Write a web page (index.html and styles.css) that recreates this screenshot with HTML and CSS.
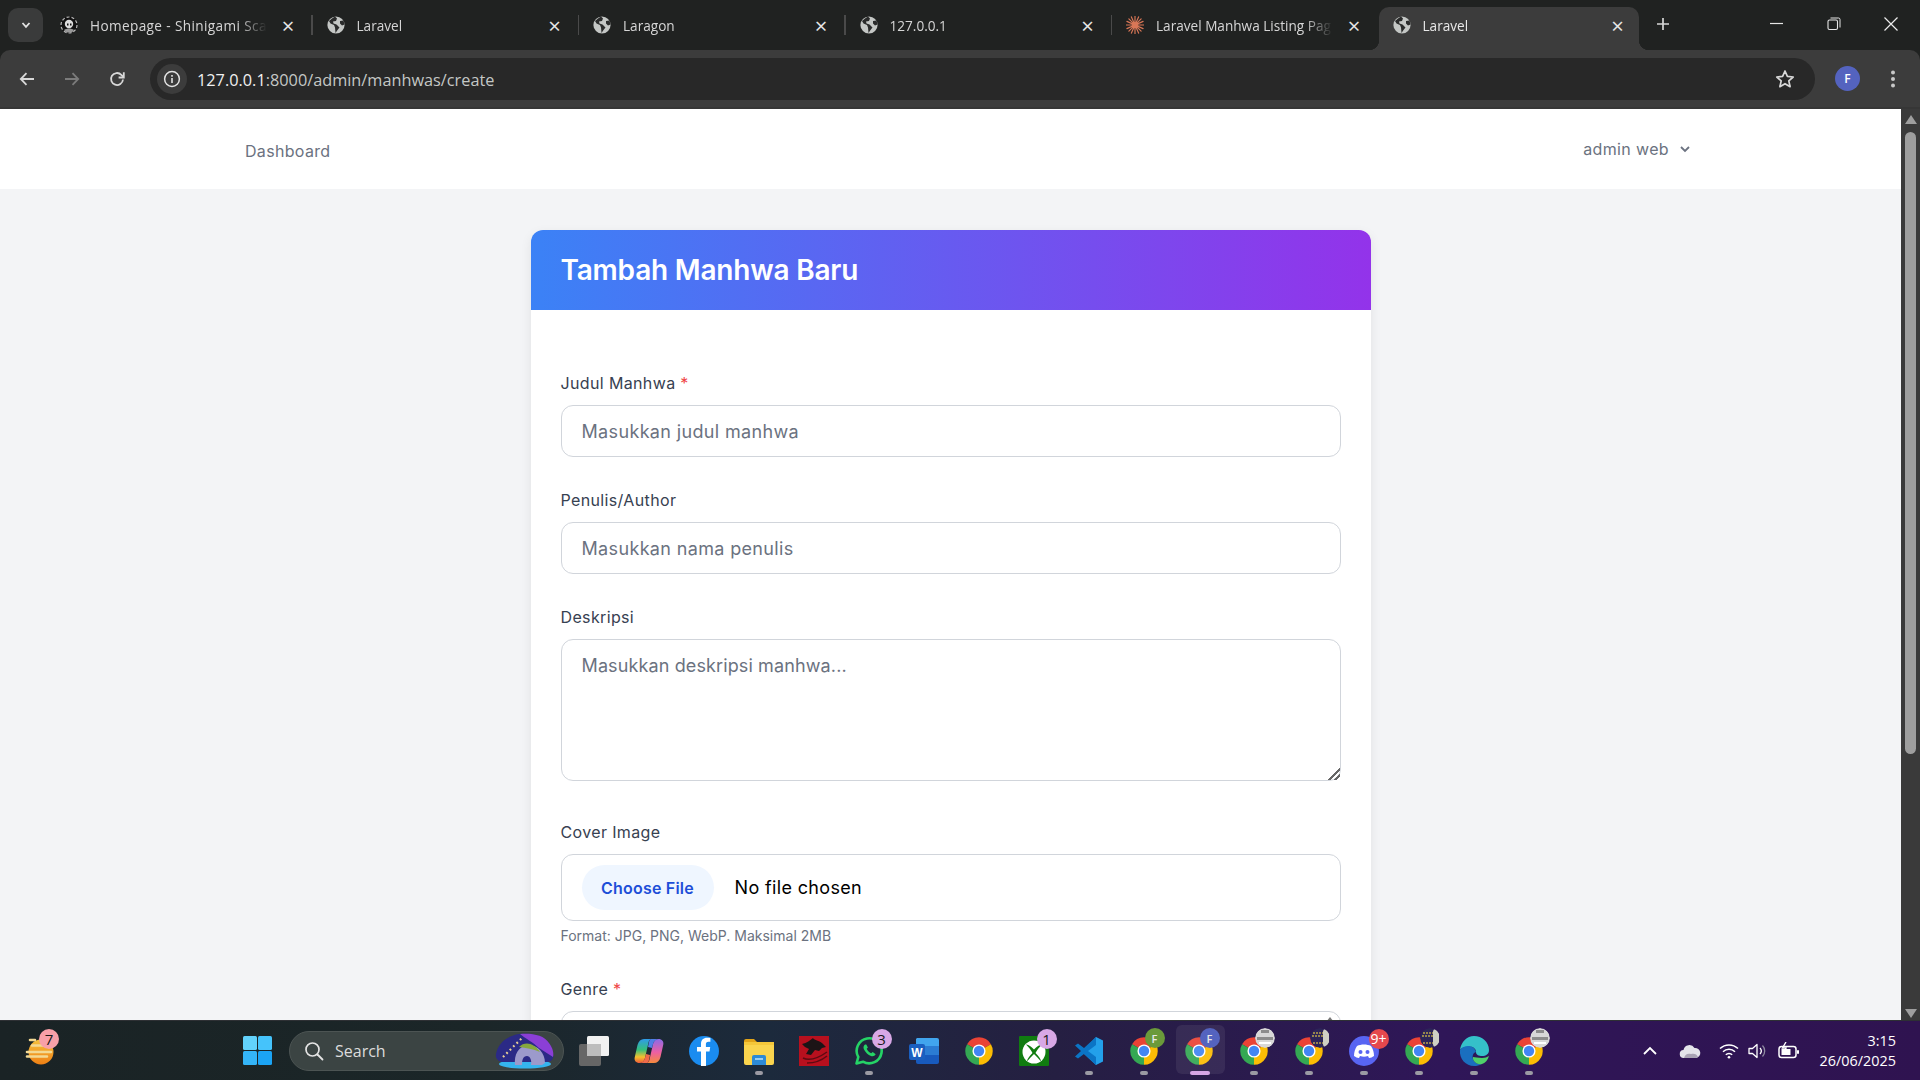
FILE: index.html
```html
<!DOCTYPE html>
<html lang="en">
<head>
<meta charset="utf-8">
<title>Laravel</title>
<link rel="stylesheet" href="styles.css">
</head>
<body>
<svg class="sprite" aria-hidden="true">
  <symbol id="globe" viewBox="0 0 18 18">
    <circle cx="9" cy="9" r="8.6" fill="#c4c7c5"/>
    <path d="M8 .6 5 2.5 2 5l1.5 2.5L7 9l1 2.5.5 5.5 2-3 2-2.500L9.500 8.500 6.500 7.500 6 5.500l3-.5 1-2.500zM13 5l3.500-.5 1 4-2.500 1-2-2z" fill="#2a2b2b"/>
  </symbol>
  <symbol id="skull" viewBox="0 0 18 18">
    <circle cx="9" cy="9" r="8.500" fill="#111"/>
    <circle cx="9" cy="9" r="8" fill="none" stroke="#bbb" stroke-width="1.200" stroke-dasharray="3 2"/>
    <circle cx="9" cy="8" r="4.200" fill="#ddd"/>
    <path d="M7 9.500h1.500v-2H7zM10 9.500h1.500v-2H10z" fill="#111"/>
    <path d="M4 14c3-2 7-2 10 0l-2 2.500H6z" fill="#999"/>
  </symbol>
  <symbol id="star" viewBox="0 0 20 20">
    <g stroke="#d97757" stroke-width="1.300" stroke-linecap="round">
      <path d="M10 0v20M0 10h20M3.200 3.200l13.600 13.600M16.800 3.200 3.200 16.800M6 1l8 18M14 1 6 19M1 6l18 8M19 6 1 14"/>
    </g>
  </symbol>
  <symbol id="chrome" viewBox="0 0 48 48">
    <path d="M24 24 43.050 13A22 22 0 0 0 4.950 13z" fill="#ea4335"/>
    <path d="M24 24 4.950 13A22 22 0 0 0 24 46z" fill="#34a853"/>
    <path d="M24 24 24 46A22 22 0 0 0 43.050 13z" fill="#fbbc04"/>
    <circle cx="24" cy="24" r="10.500" fill="#fff"/>
    <circle cx="24" cy="24" r="8.300" fill="#4285f4"/>
  </symbol>
  <symbol id="photo-dark" viewBox="0 0 20 20">
    <circle cx="10" cy="10" r="10" fill="#2c2458"/>
    <rect x="13" y="1" width="6" height="18" rx="3" fill="#cfcfc4"/>
    <path d="M3 5h10M2 8h11M3 15h10" stroke="#b9a24a" stroke-width="1.500" stroke-dasharray="2 1"/>
  </symbol>
  <symbol id="photo-light" viewBox="0 0 20 20">
    <circle cx="10" cy="10" r="10" fill="#d8d8d8"/>
    <path d="M2 9h16v3H2zM6 2h8v3H6z" fill="#8d8d8d"/>
    <path d="M4 15h12" stroke="#fff" stroke-width="2"/>
  </symbol>
  <linearGradient id="cop-left" x1="0" y1="0" x2="0" y2="1"><stop offset="0" stop-color="#2f9bea"/><stop offset=".45" stop-color="#35c07a"/><stop offset=".75" stop-color="#f5c02e"/><stop offset="1" stop-color="#ee5a3a"/></linearGradient>
  <linearGradient id="cop-right" x1="0" y1="0" x2="0" y2="1"><stop offset="0" stop-color="#8b6be8"/><stop offset=".55" stop-color="#ec5fa4"/><stop offset="1" stop-color="#f58a3c"/></linearGradient>
  <linearGradient id="sun" x1="0" y1="0" x2="0" y2="1"><stop offset="0" stop-color="#f6c23e"/><stop offset="1" stop-color="#ee7f14"/></linearGradient>
</svg>

<header class="browser">
  <div class="tabstrip">
    <button class="tab-menu" type="button">
      <svg class="ico-12" viewBox="0 0 12 12"><path d="M2.500 4 6 7.800 9.500 4" fill="none" stroke="#e3e3e3" stroke-width="1.800"/></svg>
    </button>
    <div class="tab">
      <svg class="favicon"><use href="#skull"/></svg>
      <span class="tab-title tab-title-wide">Homepage - Shinigami Sca</span>
      <span class="tab-close">×</span>
    </div>
    <div class="tab">
      <svg class="favicon"><use href="#globe"/></svg>
      <span class="tab-title">Laravel</span>
      <span class="tab-close">×</span>
    </div>
    <div class="tab">
      <svg class="favicon"><use href="#globe"/></svg>
      <span class="tab-title">Laragon</span>
      <span class="tab-close">×</span>
    </div>
    <div class="tab">
      <svg class="favicon"><use href="#globe"/></svg>
      <span class="tab-title">127.0.0.1</span>
      <span class="tab-close">×</span>
    </div>
    <div class="tab tab-before-active">
      <svg class="favicon"><use href="#star"/></svg>
      <span class="tab-title">Laravel Manhwa Listing Pag</span>
      <span class="tab-close">×</span>
    </div>
    <div class="tab tab-active">
      <svg class="favicon"><use href="#globe"/></svg>
      <span class="tab-title">Laravel</span>
      <span class="tab-close">×</span>
    </div>
    <svg class="new-tab" viewBox="0 0 14 14"><path d="M7 1v12M1 7h12" stroke="#d6d6d6" stroke-width="1.700"/></svg>
    <div class="window-controls">
      <svg class="win-btn" viewBox="0 0 14 14"><path d="M0 6.500h13" stroke="#e6e6e6" stroke-width="1.200"/></svg>
      <svg class="win-btn" viewBox="0 0 14 14"><rect x="1" y="3" width="9.500" height="9.500" rx="1.500" fill="none" stroke="#e6e6e6" stroke-width="1.100"/><path d="M3.500 1h8a1.500 1.500 0 0 1 1.500 1.500v8" fill="none" stroke="#e6e6e6" stroke-width="1"/></svg>
      <svg class="win-btn" viewBox="0 0 14 14"><path d="M.5.500l13 13M13.500.500l-13 13" stroke="#ececec" stroke-width="1.200"/></svg>
    </div>
  </div>
  <div class="toolbar">
    <svg class="tool-ico tool-back" viewBox="0 0 18 18"><path d="M16 9H3M8.500 3.200 2.800 9l5.700 5.800" fill="none" stroke="#d8d8d8" stroke-width="1.800"/></svg>
    <svg class="tool-ico tool-forward" viewBox="0 0 18 18"><path d="M2 9h13M9.500 3.200 15.200 9l-5.700 5.800" fill="none" stroke="#7b7b7b" stroke-width="1.800"/></svg>
    <svg class="tool-ico tool-reload" viewBox="0 0 18 18"><path d="M15 9.500A6 6 0 1 1 13.300 4.800L15.500 7" fill="none" stroke="#d8d8d8" stroke-width="1.800"/><path d="M15.800 2.300v5.200h-5.200" fill="none" stroke="#d8d8d8" stroke-width="1.800"/></svg>
    <div class="omnibox">
      <span class="site-info">
        <svg class="ico-18" viewBox="0 0 18 18"><circle cx="9" cy="9" r="7.400" fill="none" stroke="#e3e3e3" stroke-width="1.500"/><path d="M9 8v5M9 5v1.700" stroke="#e3e3e3" stroke-width="1.600"/></svg>
      </span>
      <span class="url"><span class="url-host">127.0.0.1</span>:8000/admin/manhwas/create</span>
      <svg class="bookmark" viewBox="0 0 20 20"><path d="m10 2 2.400 5.400 5.800.6-4.400 3.900 1.300 5.800L10 14.700l-5.100 3 1.300-5.800L1.800 8l5.800-.6z" fill="none" stroke="#d8d8d8" stroke-width="1.700" stroke-linejoin="round"/></svg>
    </div>
    <span class="profile">F</span>
    <svg class="kebab" viewBox="0 0 6 20"><circle cx="3" cy="3.500" r="2" fill="#c8c8c8"/><circle cx="3" cy="10" r="2" fill="#c8c8c8"/><circle cx="3" cy="16.500" r="2" fill="#c8c8c8"/></svg>
  </div>
</header>

<div class="viewport">
  <main class="page">
    <nav class="nav">
      <a class="nav-link">Dashboard</a>
      <button class="nav-user" type="button">admin web
        <svg class="ico-12" viewBox="0 0 12 12"><path d="M2 4l4 4 4-4" fill="none" stroke="#6b7280" stroke-width="1.800"/></svg>
      </button>
    </nav>
    <section class="card">
      <h1 class="card-head">Tambah Manhwa Baru</h1>
      <form class="card-body">
        <div class="field">
          <label class="label">Judul Manhwa <span class="req">*</span></label>
          <input class="control" type="text" placeholder="Masukkan judul manhwa">
        </div>
        <div class="field">
          <label class="label">Penulis/Author</label>
          <input class="control" type="text" placeholder="Masukkan nama penulis">
        </div>
        <div class="field field-area">
          <label class="label">Deskripsi</label>
          <textarea class="control control-area" placeholder="Masukkan deskripsi manhwa..."></textarea>
        </div>
        <div class="field">
          <label class="label">Cover Image</label>
          <div class="control control-file">
            <span class="file-btn">Choose File</span>
            <span class="file-name">No file chosen</span>
          </div>
          <p class="hint">Format: JPG, PNG, WebP. Maksimal 2MB</p>
        </div>
        <div class="field">
          <label class="label">Genre <span class="req">*</span></label>
          <div class="control control-multi"><span class="multi-up"></span></div>
        </div>
      </form>
    </section>
  </main>
  <aside class="scrollbar">
    <span class="arrow-up"></span>
    <span class="thumb"></span>
    <span class="arrow-down"></span>
  </aside>
</div>

<footer class="taskbar">
  <div class="weather">
    <svg class="weather-ico" viewBox="0 0 32 32">
      <circle cx="19" cy="17" r="12.500" fill="url(#sun)"/>
      <path d="M8 5h5M10 10.500h16M5 17h24M5 21.500h20" stroke="#f3d993" stroke-width="2.600" stroke-linecap="round"/>
    </svg>
    <span class="badge badge-pink">7</span>
  </div>
  <div class="start">
    <svg class="start-ico" viewBox="0 0 29 29">
      <rect width="14" height="14" rx="1.500" fill="#62d2fb"/><rect x="15" width="14" height="14" rx="1.500" fill="#45c3fb"/>
      <rect y="15" width="14" height="14" rx="1.500" fill="#34b5f8"/><rect x="15" y="15" width="14" height="14" rx="1.500" fill="#1ba4f5"/>
    </svg>
  </div>
  <div class="search">
    <svg class="search-ico" viewBox="0 0 20 20"><circle cx="8.500" cy="8.500" r="6.500" fill="none" stroke="#e4e4e4" stroke-width="1.700"/><path d="m13.500 13.500 5 5" stroke="#e4e4e4" stroke-width="1.800" stroke-linecap="round"/></svg>
    <span class="search-text">Search</span>
    <svg class="search-art" viewBox="0 0 60 36">
      <ellipse cx="30" cy="31" rx="26" ry="4.500" fill="#35b4ee"/>
      <path d="M1 21C3 10 12 3 24 1c12-1 24 1 29 9 4 5 6 11 5 15-1 3-4 4-7 4H8c-4 0-8-3-7-8z" fill="#2b2a86"/>
      <path d="M25 1c12-1 24 1 29 9 4 5 5 11 4 14L44 15c-6-6-13-9-19-14z" fill="#8b3fd6"/>
      <path d="M20 32c-1-10 3-19 13-20 10 0 17 8 17 18l-3 2H36c1-5-1-9-4-9-4 0-5 4-5 9z" fill="#9c9acb"/>
      <path d="M24 14c6-6 15-4 21 5-7-3-14-4-21-5z" fill="#86a83d"/>
      <path d="M8 24 28 4" stroke="#e8cf95" stroke-width="2.200" stroke-dasharray="1.800 3"/>
    </svg>
  </div>
  <ul class="apps">
    <li class="app">
      <svg class="app-ico" viewBox="0 0 30 30"><rect y="8" width="22" height="22" rx="2" fill="#666"/><rect x="8" width="22" height="20" rx="1.500" fill="#f1f1f1"/><rect x="8" y="8" width="14" height="12" fill="#bdbdbd"/></svg>
    </li>
    <li class="app">
      <svg class="app-ico" viewBox="0 0 30 26">
        <path d="M10 1h8c-2 0-3 1.500-3.500 3.500L11 20c-.7 3-2.500 5-5.500 5C2 25 0 22.500.7 19.500L3.500 7C4.500 3 7 1 10 1z" fill="url(#cop-left)"/>
        <path d="M20 25h-8c2 0 3-1.500 3.500-3.500L19 6c.7-3 2.500-5 5.500-5 3.500 0 5.500 2.500 4.800 5.500L26.500 19c-1 4-3.500 6-6.500 6z" fill="url(#cop-right)"/>
        <path d="M17 1h8c-3 0-5 1.500-6 5l-1 4-4-1 1-5c.3-1.500 1-3 2-3z" fill="#4f7fe6"/>
        <path d="M13 25H5.500c3 0 4.500-2 5.500-5l1-4 4 1-1 5c-.3 1.500-1 3-2 3z" fill="#ef6a4a"/>
      </svg>
    </li>
    <li class="app">
      <svg class="app-ico" viewBox="0 0 30 30"><circle cx="15" cy="15" r="15" fill="#1a8cf0"/><path d="M20.500 15.500l.7-4.500h-4.300V8.200c0-1.300.6-2.400 2.500-2.400h2V2c-1-.2-2.300-.3-3.400-.3-3.600 0-6 2.200-6 6.100V11H8v4.500h4V30h5V15.500z" fill="#fff"/></svg>
    </li>
    <li class="app app-on">
      <svg class="app-ico" viewBox="0 0 30 30"><path d="M0 5a2 2 0 0 1 2-2h8l3 3H0z" fill="#e2a418"/><path d="M0 6h30v21a2 2 0 0 1-2 2H2a2 2 0 0 1-2-2z" fill="#fad44e"/><path d="M0 6h30v3H0z" fill="#f5c73a"/><path d="M8 21a2 2 0 0 1 2-2h10a2 2 0 0 1 2 2v8H8z" fill="#2d8ad6"/><path d="M11 23h8" stroke="#bfe3fb" stroke-width="1.500"/></svg>
    </li>
    <li class="app">
      <svg class="app-ico" viewBox="0 0 30 30"><rect width="30" height="30" fill="#b8101e"/><path d="M3 8c5-1 8-4 11-6 1 2 5 2 9 5l4 4-4 1-3 3-4-1-4 5-5-1 3-5-4-2z" fill="#1c1416"/><path d="M4 22c6 3 14 1 24-6M8 27c6 0 14-2 20-7" stroke="#5e0a12" stroke-width="1.500" fill="none"/></svg>
    </li>
    <li class="app app-on">
      <svg class="app-ico" viewBox="0 0 30 30"><path d="M2.500 27.500 4.300 21A12.500 12.500 0 1 1 9 25.700z" fill="none" stroke="#25d366" stroke-width="2.600" stroke-linejoin="round"/><path d="M11 8.500c-1.500 1-2 3-1 5 1.500 3 4 5.300 7 6.500 2 .7 3.800 0 4.700-1.700l-3-2.200-1.500 1.200c-2-.8-3.600-2.500-4.500-4.500l1.200-1.400-1.600-3z" fill="#25d366"/></svg>
      <span class="badge badge-lilac">3</span>
    </li>
    <li class="app">
      <svg class="app-ico" viewBox="0 0 30 30"><path d="M8 2h20a2 2 0 0 1 2 2v6H7V3z" fill="#41a5ee"/><rect x="7" y="10" width="23" height="9" fill="#2b7cd3"/><path d="M7 19h23v7a2 2 0 0 1-2 2H9a2 2 0 0 1-2-2z" fill="#185abd"/><rect y="8" width="16" height="16" rx="2" fill="#1a5fc0"/><text class="word-w" x="8" y="20.500">W</text></svg>
    </li>
    <li class="app"><svg class="app-ico"><use href="#chrome"/></svg></li>
    <li class="app">
      <svg class="app-ico" viewBox="0 0 30 30"><rect width="30" height="30" rx="1" fill="#107c10"/><circle cx="15" cy="16" r="11.500" fill="#fff"/><path d="M15 13.500C12 10.500 9 8 7 8.500c2.500 2.500 5 5.500 6.500 8.500-3 3-5.500 6-5.500 8.500 2-2.500 4.500-5 7-7.500 2.500 2.500 5 5 7 7.500 0-2.500-2.500-5.500-5.500-8.500 1.500-3 4-6 6.500-8.500-2-.5-5 2-8 5z" fill="#107c10"/></svg>
      <span class="badge badge-lilac">1</span>
    </li>
    <li class="app app-on">
      <svg class="app-ico" viewBox="0 0 30 30"><path d="M22 1 29 4.500v21L22 29 8 16z" fill="#23a0ea"/><path d="M22 1 10 12 4 7.500 1 9.500 7 15l-6 5.500 3 2 6-4.500 12 11V21l-8-6 8-6z" fill="#0b74c5"/></svg>
    </li>
    <li class="app app-on">
      <svg class="app-ico"><use href="#chrome"/></svg>
      <span class="avatar avatar-green">F</span>
    </li>
    <li class="app app-on app-active">
      <svg class="app-ico"><use href="#chrome"/></svg>
      <span class="avatar avatar-blue">F</span>
    </li>
    <li class="app app-on">
      <svg class="app-ico"><use href="#chrome"/></svg>
      <svg class="avatar"><use href="#photo-light"/></svg>
    </li>
    <li class="app app-on">
      <svg class="app-ico"><use href="#chrome"/></svg>
      <svg class="avatar"><use href="#photo-dark"/></svg>
    </li>
    <li class="app app-on">
      <svg class="app-ico" viewBox="0 0 30 30"><circle cx="15" cy="15" r="15" fill="#5865f2"/><path d="M8 10c4-2 10-2 14 0 2 3 3 6 3 10-2 1-3 2-5 2l-1-2c-3 1-5 1-8 0l-1 2c-2 0-3-1-5-2 0-4 1-7 3-10z" fill="#fff"/><circle cx="11.500" cy="16" r="2" fill="#5865f2"/><circle cx="18.500" cy="16" r="2" fill="#5865f2"/></svg>
      <span class="badge badge-red">9+</span>
    </li>
    <li class="app app-on">
      <svg class="app-ico"><use href="#chrome"/></svg>
      <svg class="avatar"><use href="#photo-dark"/></svg>
    </li>
    <li class="app app-on">
      <svg class="app-ico" viewBox="0 0 30 30"><path d="M1 14C2 6 8 0 15 0c8 0 15 6 15 14 0 4-3 6-7 6-3 0-6-1-6-4 0-4-4-6-8-5-4 0-7 1-8 3z" fill="#35c1c9"/><path d="M1 14c2-3 5-4 8-4 4 0 7 2 8 6-3 1-4 4-3 7 1 3 4 6 9 5-3 1.500-5 2-8 2C7 30 0 23 1 14z" fill="#1a6fbf"/><path d="M14 23c1 3 4 6 9 5 3-1 6-4 7-8-2 1-4 2-7 2-4 0-7-1-9-1z" fill="#4fd06a"/></svg>
    </li>
    <li class="app app-on">
      <svg class="app-ico"><use href="#chrome"/></svg>
      <svg class="avatar"><use href="#photo-light"/></svg>
    </li>
  </ul>
  <div class="tray">
    <svg class="tray-chev" viewBox="0 0 14 10"><path d="M1 8l6-6 6 6" fill="none" stroke="#fff" stroke-width="1.800"/></svg>
    <svg class="tray-cloud" viewBox="0 0 22 16"><path d="M5 15a4 4 0 0 1-.5-8A6 6 0 0 1 15.500 5 5 5 0 0 1 17 15z" fill="#e4e4ea"/><path d="M5 15c1-4 4-5 7-4 3-1 6 0 7 3l-2 1z" fill="#a9a4b4"/></svg>
    <svg class="tray-wifi" viewBox="0 0 20 16"><path d="M1 5.500a13 13 0 0 1 18 0M4 8.800a8.500 8.500 0 0 1 12 0M6.800 11.800a4.500 4.500 0 0 1 6.400 0" fill="none" stroke="#fff" stroke-width="1.500"/><circle cx="10" cy="14.300" r="1.300" fill="#fff"/></svg>
    <svg class="tray-vol" viewBox="0 0 20 18"><path d="M1 6.500h3.500L9 2.500v13l-4.500-4H1z" fill="none" stroke="#fff" stroke-width="1.300" stroke-linejoin="round"/><path d="M12 6a4.500 4.500 0 0 1 0 6" fill="none" stroke="#fff" stroke-width="1.300"/><path d="M14.500 3.500a8 8 0 0 1 0 11" fill="none" stroke="#8f8aa0" stroke-width="1.300"/></svg>
    <svg class="tray-bat" viewBox="0 0 22 18"><rect x="1" y="4.500" width="17" height="11" rx="2.500" fill="none" stroke="#fff" stroke-width="1.500"/><rect x="19" y="8" width="2" height="4" rx="1" fill="#fff"/><rect x="3.500" y="7" width="9" height="6" fill="#fff"/><path d="M8 0 4.500 6H8l-1 4" fill="none" stroke="#fff" stroke-width="1.400"/></svg>
    <div class="clock"><span>3:15</span><span>26/06/2025</span></div>
  </div>
</footer>
</body>
</html>
```

FILE: styles.css
```css
* { box-sizing: border-box; }
html, body { margin: 0; padding: 0; height: 100%; overflow: hidden; }
body { display: flex; flex-direction: column; height: 1080px; font-family: "Open Sans", "Noto Sans", sans-serif; background: #f3f4f6; }
.sprite { position: absolute; width: 0; height: 0; }
.ico-12 { width: 12px; height: 12px; display: block; }
.ico-18 { width: 18px; height: 18px; display: block; }

/* browser chrome */
.browser { flex: none; height: 109px; background: #202221; display: flex; flex-direction: column; }
.tabstrip { height: 50px; display: flex; align-items: flex-start; padding: 7px 0 0 8px; position: relative; }
.tab-menu { width: 35px; height: 34px; margin: 1px 3px 0 0; border: 0; border-radius: 10px; background: #3a3b3b; display: flex; align-items: center; justify-content: center; padding: 0; }
.tab { width: 266.500px; height: 36px; flex: none; display: flex; align-items: center; padding: 0 0 0 14px; position: relative; color: #d6d6d6; font-size: 13.600px; }
.tab::after { content: ""; position: absolute; right: 0; top: 8px; height: 20px; width: 1.500px; background: #4a4a4a; }
.tab-before-active::after, .tab-active::after { display: none; }
.favicon { width: 18px; height: 18px; flex: none; }
.tab-title { margin-left: 12px; width: 177px; white-space: nowrap; overflow: hidden; -webkit-mask-image: linear-gradient(90deg, #000 84%, transparent 100%); mask-image: linear-gradient(90deg, #000 84%, transparent 100%); }
.tab-title-wide { letter-spacing: .38px; }
.tab-close { margin-left: 13px; width: 16px; text-align: center; font-size: 22px; line-height: 20px; color: #e6e6e6; }
.tab-active { width: 260px; height: 43px; padding-bottom: 7px; background: #3c3c3c; border-radius: 10px 10px 0 0; color: #e8e8e8; }
.tab-active .tab-title { width: 174px; }
.tab-active::before { content: ""; position: absolute; left: -10px; bottom: 0; width: 10px; height: 10px; background: radial-gradient(circle at 0 0, transparent 10px, #3c3c3c 10.500px); }
.tab-active::after { content: ""; display: block; position: absolute; right: -10px; top: auto; bottom: 0; width: 10px; height: 10px; background: radial-gradient(circle at 100% 0, transparent 10px, #3c3c3c 10.500px); }
.new-tab { width: 14px; height: 14px; margin: 10px 0 0 17px; }
.window-controls { margin-left: auto; display: flex; gap: 43px; padding: 10px 22px 0 0; }
.win-btn { width: 14px; height: 14px; display: block; }
.toolbar { flex: 1; display: flex; align-items: center; background: #3c3c3c; border-radius: 10px 10px 0 0; border-bottom: 2px solid #363636; padding: 0 0 0 18px; }
.tool-ico { width: 18px; height: 18px; flex: none; }
.tool-forward { margin-left: 27px; }
.tool-reload { margin-left: 27px; }
.omnibox { width: 1665px; height: 42px; margin-left: 24px; border-radius: 21px; background: #282828; display: flex; align-items: center; padding: 0 20px 0 7px; }
.site-info { width: 30px; height: 30px; border-radius: 50%; background: #3c3c3c; display: flex; align-items: center; justify-content: center; flex: none; }
.url { margin: 3px 0 0 10px; font-size: 16.300px; color: #c4c7c5; white-space: nowrap; }
.url-host { color: #f0f0f0; }
.bookmark { width: 20px; height: 20px; margin-left: auto; }
.profile { width: 25px; height: 25px; margin-left: 20px; border-radius: 50%; background: #5463bf; color: #fff; font-size: 12px; font-weight: 600; display: flex; align-items: center; justify-content: center; flex: none; }
.kebab { width: 6px; height: 20px; margin-left: 30px; flex: none; }

/* page */
.viewport { flex: none; height: 911px; display: flex; overflow: hidden; }
.page { flex: 1; min-width: 0; height: 911px; overflow: hidden; background: #f3f4f6; font-family: Inter, "Noto Sans", sans-serif; }
.nav { height: 80px; background: #fff; display: flex; justify-content: space-between; padding: 0 210px 0 245px; }
.nav-link { align-self: center; margin-top: 4px; font-size: 16px; letter-spacing: .32px; color: #6b7280; }
.nav-user { align-self: center; margin: 0; padding: 0; border: 0; background: none; font: inherit; font-size: 16px; letter-spacing: .36px; color: #6b7280; display: flex; align-items: center; gap: 10px; }
.card { width: 840px; margin: 41px auto 0; background: #fff; border-radius: 12px; box-shadow: 0 4px 12px rgba(0,0,0,.08); }
.card-head { margin: 0; height: 80px; padding: 0 30px; border-radius: 12px 12px 0 0; background: linear-gradient(90deg, #3b82f6, #9333ea); color: #fff; font-size: 28px; font-weight: 600; letter-spacing: -.2px; line-height: 80px; }
.card-body { padding: 61px 30px 0; }
.field { margin-bottom: 31px; }
.field-area { margin-bottom: 39px; }
.label { display: block; height: 24px; line-height: 24px; margin-bottom: 10px; font-size: 16px; font-weight: 400; letter-spacing: .36px; color: #374151; }
.req { color: #ef4444; }
.control { display: block; width: 100%; height: 52px; padding: 0 20px; border: 1.500px solid #d1d5db; border-radius: 12px; background: #fff; font: inherit; font-size: 18px; letter-spacing: .35px; color: #111; outline: 0; }
.control::placeholder { color: #6b7280; opacity: 1; }
.control-area { height: 142px; padding: 15px 20px; resize: vertical; letter-spacing: .12px; }
.control-area::-webkit-resizer { background: linear-gradient(135deg, transparent 58%, #666 58%, #666 68%, transparent 68%, transparent 78%, #666 78%, #666 88%, transparent 88%); }
.control-file { height: 67px; display: flex; align-items: center; }
.file-btn { width: 132px; height: 45px; border-radius: 23px; background: #eff6ff; color: #1d4ed8; font-size: 16px; font-weight: 600; letter-spacing: .2px; padding-top: 1px; display: flex; align-items: center; justify-content: center; }
.file-name { margin-left: 21px; color: #000; }
.hint { margin: 5px 0 0; font-size: 14px; line-height: 20px; color: #6b7280; }
.control-multi { height: 120px; position: relative; }
.multi-up { position: absolute; right: 6px; top: 5px; border: 4px solid transparent; border-bottom: 5px solid #777; border-top: 0; }

.scrollbar { flex: none; width: 19px; background: #3a3a3a; display: flex; flex-direction: column; align-items: center; padding-top: 6px; position: relative; }
.arrow-up { border: 6.500px solid transparent; border-top: 0; border-bottom: 9px solid #9e9e9e; }
.thumb { width: 11px; height: 622px; margin-top: 8px; border-radius: 6px; background: #9e9e9e; }
.arrow-down { position: absolute; bottom: 2px; border: 6.500px solid transparent; border-bottom: 0; border-top: 9px solid #9e9e9e; }

/* taskbar */
.taskbar { flex: none; height: 60px; display: flex; align-items: center; background: linear-gradient(90deg, #1a2325 0%, #1b2628 25%, #1c2a3c 40%, #251f42 55%, #2f1658 75%, #2f1350 100%); border-top: 1px solid #2e3034; color: #fff; font-family: "Open Sans", "Noto Sans", sans-serif; }
.weather { width: 230px; height: 100%; flex: none; position: relative; padding: 14px 0 0 22px; }
.weather-ico { width: 32px; height: 32px; display: block; }
.start { width: 55px; flex: none; display: flex; justify-content: center; }
.start-ico { width: 29px; height: 29px; display: block; }
.search { width: 275px; height: 40px; margin-left: 4px; flex: none; border-radius: 20px; background: #3b4443; border: 1px solid #4c5453; display: flex; align-items: center; padding: 0 8px 0 14px; }
.search-ico { width: 20px; height: 20px; }
.search-text { margin-left: 11px; font-size: 16px; color: #dcdcdc; }
.search-art { width: 60px; height: 36px; margin-left: auto; }
.apps { list-style: none; margin: 0 0 0 2.500px; padding: 0; display: flex; flex: none; }
.app { width: 55px; height: 59px; display: flex; align-items: center; justify-content: center; position: relative; }
.app-ico { width: 30px; height: 30px; display: block; }
.app-on::after { content: ""; position: absolute; left: 23.500px; top: 50px; width: 8px; height: 4px; border-radius: 2px; background: #9b9aa3; }
.app-active::before { content: ""; position: absolute; left: 4px; top: 4px; width: 49px; height: 49px; border-radius: 6px; background: rgba(255,255,255,.07); }
.app-active::after { left: 18px; width: 20px; background: #d6a5e6; }
.word-w { font-family: "Liberation Sans", sans-serif; font-size: 12px; font-weight: 700; fill: #fff; text-anchor: middle; }
.badge { position: absolute; left: 30px; top: 8px; min-width: 20px; height: 20px; padding: 0 2px; border-radius: 10px; color: #1a1a1a; font-size: 15px; line-height: 20px; text-align: center; }
.badge-lilac { background: #d8a8e6; }
.badge-pink { left: 39px; top: 8px; background: #f8a0a8; }
.badge-red { background: #e5484d; color: #fff; font-size: 14px; left: 32px; }
.avatar { position: absolute; left: 28px; top: 7px; width: 20px; height: 20px; border-radius: 50%; color: #e8e8e8; font-size: 11px; font-weight: 600; display: flex; align-items: center; justify-content: center; }
.avatar-green { background: #6a9a3a; }
.avatar-blue { background: #5463bf; }
.tray { margin-left: auto; display: flex; align-items: center; padding-right: 24px; flex: none; }
.tray-chev { width: 14px; height: 10px; }
.tray-cloud { width: 22px; height: 16px; margin-left: 22px; }
.tray-wifi { width: 20px; height: 16px; margin-left: 18px; }
.tray-vol { width: 20px; height: 18px; margin-left: 9px; }
.tray-bat { width: 22px; height: 18px; margin-left: 10px; }
.clock { margin-left: 20px; display: flex; flex-direction: column; align-items: flex-end; font-size: 14.400px; line-height: 20px; }
```
